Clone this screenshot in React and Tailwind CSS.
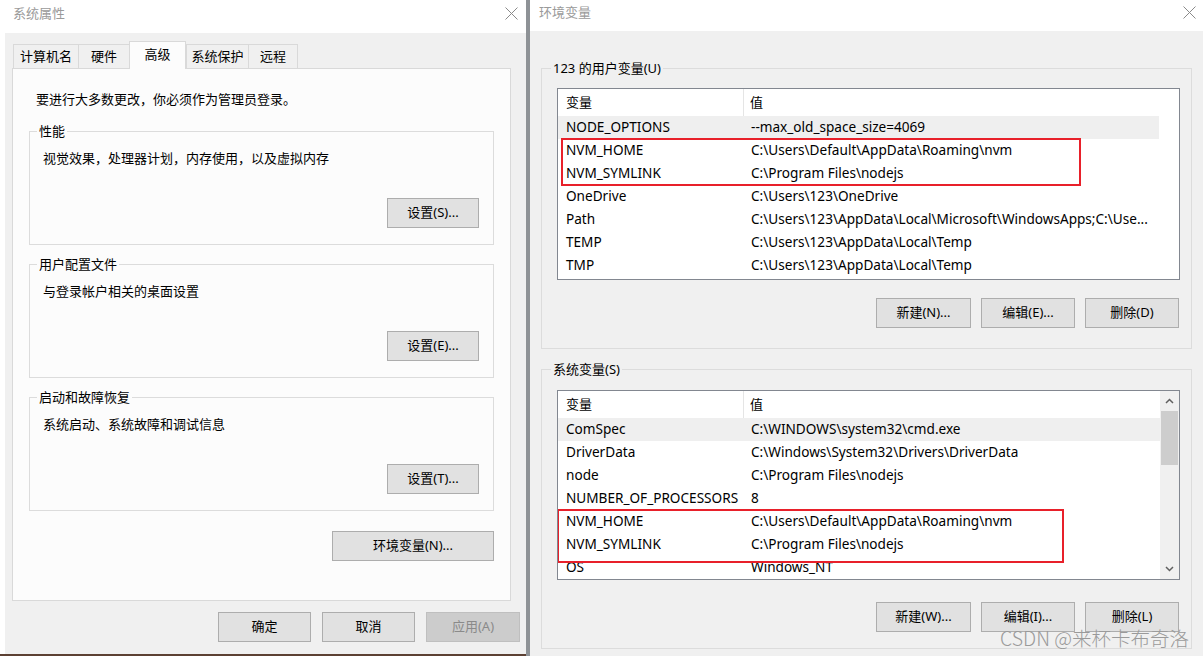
import React from 'react';

const userVars = [
  ['NODE_OPTIONS', '--max_old_space_size=4069'],
  ['NVM_HOME', 'C:\\Users\\Default\\AppData\\Roaming\\nvm'],
  ['NVM_SYMLINK', 'C:\\Program Files\\nodejs'],
  ['OneDrive', 'C:\\Users\\123\\OneDrive'],
  ['Path', 'C:\\Users\\123\\AppData\\Local\\Microsoft\\WindowsApps;C:\\Use...'],
  ['TEMP', 'C:\\Users\\123\\AppData\\Local\\Temp'],
  ['TMP', 'C:\\Users\\123\\AppData\\Local\\Temp'],
];

const sysVars = [
  ['ComSpec', 'C:\\WINDOWS\\system32\\cmd.exe'],
  ['DriverData', 'C:\\Windows\\System32\\Drivers\\DriverData'],
  ['node', 'C:\\Program Files\\nodejs'],
  ['NUMBER_OF_PROCESSORS', '8'],
  ['NVM_HOME', 'C:\\Users\\Default\\AppData\\Roaming\\nvm'],
  ['NVM_SYMLINK', 'C:\\Program Files\\nodejs'],
  ['OS', 'Windows_NT'],
];

const tabs = [
  { label: '计算机名', w: 'w-[65px]' },
  { label: '硬件', w: 'w-[51px]' },
  { label: '高级', w: 'w-[57px]', active: true },
  { label: '系统保护', w: 'w-[62px]' },
  { label: '远程', w: 'w-[50px]' },
];

const CloseIcon = () => (
  <svg width="13" height="13" viewBox="0 0 13 13">
    <path d="M0.5 0.5L12.5 12.5M12.5 0.5L0.5 12.5" stroke="#8a8a8a" strokeWidth="1" />
  </svg>
);

const Chevron = ({ down }) => (
  <svg width="9" height="6" viewBox="0 0 9 6">
    <path
      d={down ? 'M1 1L4.5 4.5L8 1' : 'M1 5L4.5 1.5L8 5'}
      stroke="#606060"
      strokeWidth="1.5"
      fill="none"
    />
  </svg>
);

const Btn = ({ children, className = '', disabled }) => (
  <button
    className={`h-[30px] border text-[13px] flex items-center justify-center ${
      disabled
        ? 'border-[#bfbfbf] bg-[#cccccc] text-[#8a8a8a]'
        : 'border-[#adadad] bg-[#e1e1e1] text-black'
    } ${className}`}
  >
    {children}
  </button>
);

const Group = ({ title, text, button }) => (
  <fieldset className="border border-[#dcdcdc] h-[123px] pl-[13px] pr-[14px] flex flex-col">
    <legend className="-ml-[6px] px-[2px] text-[13px] leading-[18px]">{title}</legend>
    <p className="mt-[9px] text-[13px] leading-[18px]">{text}</p>
    <Btn className="w-[92px] self-end mt-[31px]">{button}</Btn>
  </fieldset>
);

const VarList = ({ rows, height, scroll, box }) => (
  <div className={`relative ${height} border border-[#828790] bg-white flex overflow-hidden`}>
    <div className="flex-1 flex flex-col min-w-0">
      <div className="h-[27px] flex items-center shrink-0">
        <div className="w-[186px] h-full flex items-center pl-[8px] border-r border-[#e5e5e5]">变量</div>
        <div className="pl-[6px]">值</div>
      </div>
      {rows.map(([k, v], i) => (
        <div
          key={k + i}
          className={`h-[23px] shrink-0 flex items-center text-[13.6px] ${i === 0 ? 'bg-[#efefef]' : ''}`}
        >
          <div className="w-[186px] pl-[8px] whitespace-nowrap overflow-hidden">{k}</div>
          <div className="pl-[7px] whitespace-nowrap overflow-hidden">{v}</div>
        </div>
      ))}
    </div>
    {scroll ? (
      <div className="w-[19px] bg-[#f0f0f0] flex flex-col items-center">
        <div className="h-[20px] flex items-center justify-center">
          <Chevron />
        </div>
        <div className="w-[17px] h-[54px] bg-[#cdcdcd]" />
        <div className="flex-1" />
        <div className="h-[20px] flex items-center justify-center">
          <Chevron down />
        </div>
      </div>
    ) : (
      <div className="w-[20px]" />
    )}
    <div className={`absolute border-2 border-[#e8202a] pointer-events-none ${box}`} />
  </div>
);

export default function App() {
  return (
    <div className="w-[1203px] h-[656px] flex overflow-hidden bg-white text-black font-['Noto_Sans','Noto_Sans_CJK_SC',sans-serif] text-[13px]">
      {/* 系统属性 */}
      <div className="w-[526px] h-full flex flex-col bg-white">
        <div className="h-[33px] flex items-start justify-between pl-[13px] pr-[8px] pt-[4px] shrink-0">
          <span className="text-[13px] leading-[18px] text-[#9a9a9a]">系统属性</span>
          <div className="pt-[3px]">
            <CloseIcon />
          </div>
        </div>
        <div className="flex-1 ml-[5px] bg-[#f0f0f0] flex flex-col pl-[7px] pt-[8px]">
          <div className="h-[27px] flex items-end pl-[1px]">
            {tabs.map((t) => (
              <div
                key={t.label}
                className={`${t.w} flex items-center justify-center border-t border-l border-[#d9d9d9] last:border-r ${
                  t.active
                    ? 'h-[28px] bg-[#fcfcfc] relative z-10 -mb-px border-r pb-[2px]'
                    : 'h-[24px] bg-[#f0f0f0]'
                }`}
              >
                {t.label}
              </div>
            ))}
          </div>
          <div className="w-[499px] h-[533px] border border-[#d9d9d9] bg-[#fcfcfc] px-[16px] flex flex-col">
            <p className="mt-[21px] ml-[7px] leading-[18px]">要进行大多数更改，你必须作为管理员登录。</p>
            <div className="mt-[14px] flex flex-col gap-[10px]">
              <Group title="性能" text="视觉效果，处理器计划，内存使用，以及虚拟内存" button="设置(S)..." />
              <Group title="用户配置文件" text="与登录帐户相关的桌面设置" button="设置(E)..." />
              <Group title="启动和故障恢复" text="系统启动、系统故障和调试信息" button="设置(T)..." />
            </div>
            <Btn className="w-[162px] self-end mt-[20px]">环境变量(N)...</Btn>
          </div>
          <div className="mt-[11px] flex justify-end gap-[11px] pr-[6px]">
            <Btn className="w-[93px]">确定</Btn>
            <Btn className="w-[93px]">取消</Btn>
            <Btn className="w-[94px]" disabled>应用(A)</Btn>
          </div>
        </div>
        <div className="h-[2px] bg-[#5c4033] shrink-0" />
      </div>

      <div className="w-[4px] h-full bg-[#8e9296]" />

      {/* 环境变量 */}
      <div className="relative flex-1 h-full flex flex-col bg-white">
        <div className="h-[31px] flex items-start justify-between pl-[9px] pr-[7px] pt-[3px] shrink-0">
          <span className="text-[13px] leading-[18px] text-[#9a9a9a]">环境变量</span>
          <div className="pt-[3px]">
            <CloseIcon />
          </div>
        </div>
        <div className="flex-1 bg-[#f0f0f0] px-[11px] pt-[28px] flex flex-col">
          <fieldset className="h-[290px] border border-[#dcdcdc] pl-[15px] pr-[11px] flex flex-col">
            <legend className="-ml-[6px] px-[2px] leading-[18px]">123 的用户变量(U)</legend>
            <div className="mt-[11px]">
              <VarList rows={userVars} height="h-[192px]" box="left-[3px] top-[49px] w-[520px] h-[48px]" />
            </div>
            <div className="mt-[18px] flex justify-end gap-[10px] pr-[1px]">
              <Btn className="w-[95px]">新建(N)...</Btn>
              <Btn className="w-[94px]">编辑(E)...</Btn>
              <Btn className="w-[94px]">删除(D)</Btn>
            </div>
          </fieldset>
          <fieldset className="mt-[11px] h-[289px] border border-[#dcdcdc] pl-[15px] pr-[11px] flex flex-col">
            <legend className="-ml-[6px] px-[2px] leading-[18px]">系统变量(S)</legend>
            <div className="mt-[12px]">
              <VarList rows={sysVars} height="h-[190px]" scroll box="-left-px top-[118px] w-[507px] h-[54px]" />
            </div>
            <div className="mt-[22px] flex justify-end gap-[10px] pr-[1px]">
              <Btn className="w-[95px]">新建(W)...</Btn>
              <Btn className="w-[94px]">编辑(I)...</Btn>
              <Btn className="w-[94px]">删除(L)</Btn>
            </div>
          </fieldset>
        </div>
        <div className="absolute right-[14px] bottom-[6px] text-[19.5px] leading-[24px] font-light text-[#9a9a9a] font-['Noto_Sans_CJK_SC',sans-serif]">
          CSDN @来杯卡布奇洛
        </div>
      </div>
    </div>
  );
}
